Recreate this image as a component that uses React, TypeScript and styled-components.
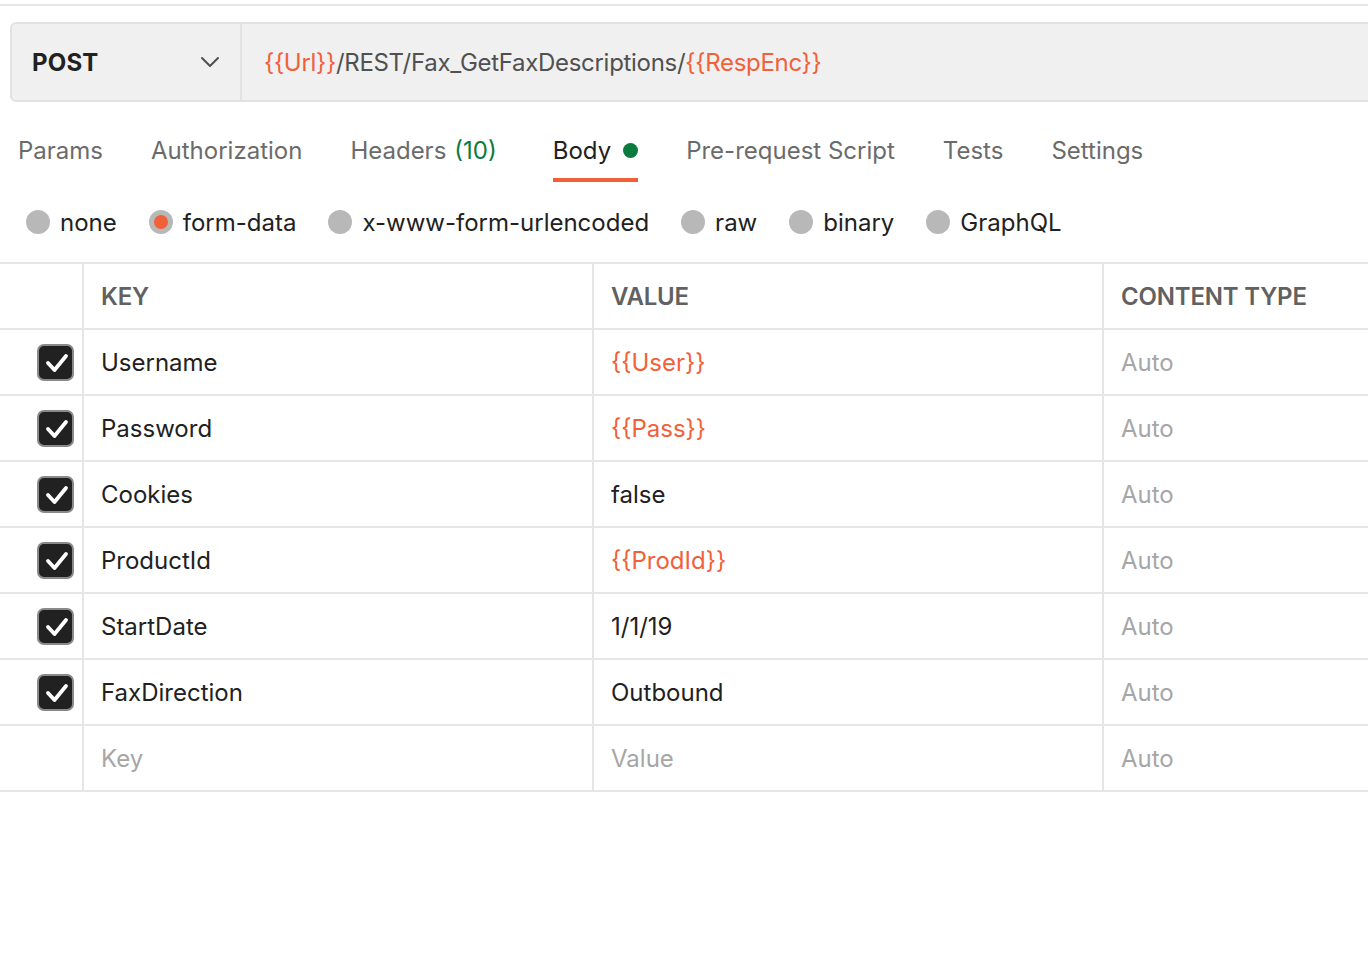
import styled, { createGlobalStyle } from "styled-components";

const GlobalStyle = createGlobalStyle`
  html, body {
    margin: 0;
    padding: 0;
    background: #ffffff;
    font-family: Inter, "Noto Sans", "Liberation Sans", sans-serif;
    color: #212121;
  }
`;

const Page = styled.div`
  width: 1368px;
  height: 958px;
  overflow: hidden;
  padding-top: 4px;
  box-sizing: border-box;
`;

const TopRule = styled.div`
  height: 2px;
  background: #e6e6e6;
`;

const UrlBar = styled.div`
  display: flex;
  height: 80px;
  margin: 16px -20px 0 10px;
  border: 2px solid #e2e2e2;
  border-radius: 6px;
  background: #f0f0f0;
  box-sizing: border-box;
`;

const Method = styled.div`
  display: flex;
  align-items: center;
  justify-content: space-between;
  width: 230px;
  padding: 0 20px 0 20px;
  box-sizing: border-box;
  border-right: 2px solid #e2e2e2;
  font-size: 24px;
  font-weight: 700;
  color: #212121;
  letter-spacing: 0.2px;
`;

const UrlText = styled.div`
  display: flex;
  align-items: center;
  padding-left: 22px;
  font-size: 24px;
  letter-spacing: -0.3px;
  color: #505050;
`;

const Var = styled.span`
  color: #f2603a;
`;

const TabBar = styled.div`
  display: flex;
  gap: 48px;
  margin: 17px 0 0 18px;
`;

const Tab = styled.div<{ $active?: boolean; $extra?: number }>`
  display: flex;
  align-items: center;
  gap: 12px;
  height: 63px;
  padding-top: 4px;
  box-sizing: border-box;
  margin-right: ${({ $extra }) => $extra ?? 0}px;
  font-size: 24px;
  color: ${({ $active }) => ($active ? "#212121" : "#6b6b6b")};
  border-bottom: 4px solid ${({ $active }) => ($active ? "#f2603a" : "transparent")};
`;

const Count = styled.span`
  color: #0a7b3c;
  margin-left: -4px;
`;

const Dot = styled.span`
  width: 15px;
  height: 15px;
  border-radius: 50%;
  background: #0a7b3c;
`;

const RadioRow = styled.div`
  display: flex;
  align-items: center;
  gap: 32px;
  height: 40px;
  margin: 20px 0 0 26px;
`;

const RadioOption = styled.label`
  display: flex;
  align-items: center;
  gap: 10px;
  font-size: 24px;
  color: #212121;
`;

const RadioCircle = styled.span<{ $checked?: boolean }>`
  display: flex;
  align-items: center;
  justify-content: center;
  width: 24px;
  height: 24px;
  border-radius: 50%;
  background: #b8b8b8;
  &::after {
    content: "";
    display: ${({ $checked }) => ($checked ? "block" : "none")};
    width: 14px;
    height: 14px;
    border-radius: 50%;
    background: #f2603a;
  }
`;

const Table = styled.div`
  margin-top: 20px;
  border-bottom: 2px solid #e6e6e6;
`;

const Row = styled.div`
  display: grid;
  grid-template-columns: 82px 510px 510px 1fr;
  height: 66px;
  border-top: 2px solid #e6e6e6;
  box-sizing: border-box;
`;

const Cell = styled.div<{ $first?: boolean; $tone?: "head" | "text" | "muted" | "var" }>`
  display: flex;
  align-items: center;
  padding-left: ${({ $first }) => ($first ? "37px" : "17px")};
  border-left: ${({ $first }) => ($first ? "none" : "2px solid #e6e6e6")};
  box-sizing: border-box;
  font-size: 24px;
  font-weight: ${({ $tone }) => ($tone === "head" ? 600 : 400)};
  text-transform: ${({ $tone }) => ($tone === "head" ? "uppercase" : "none")};
  letter-spacing: ${({ $tone }) => ($tone === "head" ? "-0.2px" : "0")};
  color: ${({ $tone }) =>
    $tone === "head"
      ? "#616161"
      : $tone === "muted"
      ? "#a6a6a6"
      : $tone === "var"
      ? "#f2603a"
      : "#212121"};
`;

const Check = styled.span`
  display: flex;
  width: 37px;
  height: 37px;
  border-radius: 7px;
  background: #212121;
  border: 2px solid #8a8a8a;
  box-sizing: border-box;
`;

const Chevron = () => (
  <svg width="20" height="12" viewBox="0 0 20 12" fill="none">
    <polyline points="2,2 10,10 18,2" stroke="#505050" strokeWidth="2" strokeLinecap="round" strokeLinejoin="round" />
  </svg>
);

const CheckMark = () => (
  <svg width="33" height="33" viewBox="0 0 33 33" fill="none">
    <polyline points="9,17 15.5,24 27,10" stroke="#ffffff" strokeWidth="3.8" strokeLinecap="round" strokeLinejoin="round" />
  </svg>
);

type Param = { key: string; value: string; isVar?: boolean };

const params: Param[] = [
  { key: "Username", value: "{{User}}", isVar: true },
  { key: "Password", value: "{{Pass}}", isVar: true },
  { key: "Cookies", value: "false" },
  { key: "ProductId", value: "{{ProdId}}", isVar: true },
  { key: "StartDate", value: "1/1/19" },
  { key: "FaxDirection", value: "Outbound" },
];

const bodyModes = ["none", "form-data", "x-www-form-urlencoded", "raw", "binary", "GraphQL"];

const App = () => {
  return (
    <Page>
      <GlobalStyle />
      <TopRule />
      <UrlBar>
        <Method>
          POST
          <Chevron />
        </Method>
        <UrlText>
          <Var>{"{{Url}}"}</Var>/REST/Fax_GetFaxDescriptions/<Var>{"{{RespEnc}}"}</Var>
        </UrlText>
      </UrlBar>

      <TabBar>
        <Tab>Params</Tab>
        <Tab>Authorization</Tab>
        <Tab $extra={8}>
          Headers <Count>(10)</Count>
        </Tab>
        <Tab $active>
          Body <Dot />
        </Tab>
        <Tab>Pre-request Script</Tab>
        <Tab>Tests</Tab>
        <Tab>Settings</Tab>
      </TabBar>

      <RadioRow>
        {bodyModes.map((mode) => (
          <RadioOption key={mode}>
            <RadioCircle $checked={mode === "form-data"} />
            {mode}
          </RadioOption>
        ))}
      </RadioRow>

      <Table>
        <Row>
          <Cell $first />
          <Cell $tone="head">Key</Cell>
          <Cell $tone="head">Value</Cell>
          <Cell $tone="head">Content Type</Cell>
        </Row>
        {params.map((p) => (
          <Row key={p.key}>
            <Cell $first>
              <Check>
                <CheckMark />
              </Check>
            </Cell>
            <Cell>{p.key}</Cell>
            <Cell $tone={p.isVar ? "var" : "text"}>{p.value}</Cell>
            <Cell $tone="muted">Auto</Cell>
          </Row>
        ))}
        <Row>
          <Cell $first />
          <Cell $tone="muted">Key</Cell>
          <Cell $tone="muted">Value</Cell>
          <Cell $tone="muted">Auto</Cell>
        </Row>
      </Table>
    </Page>
  );
};

export default App;
